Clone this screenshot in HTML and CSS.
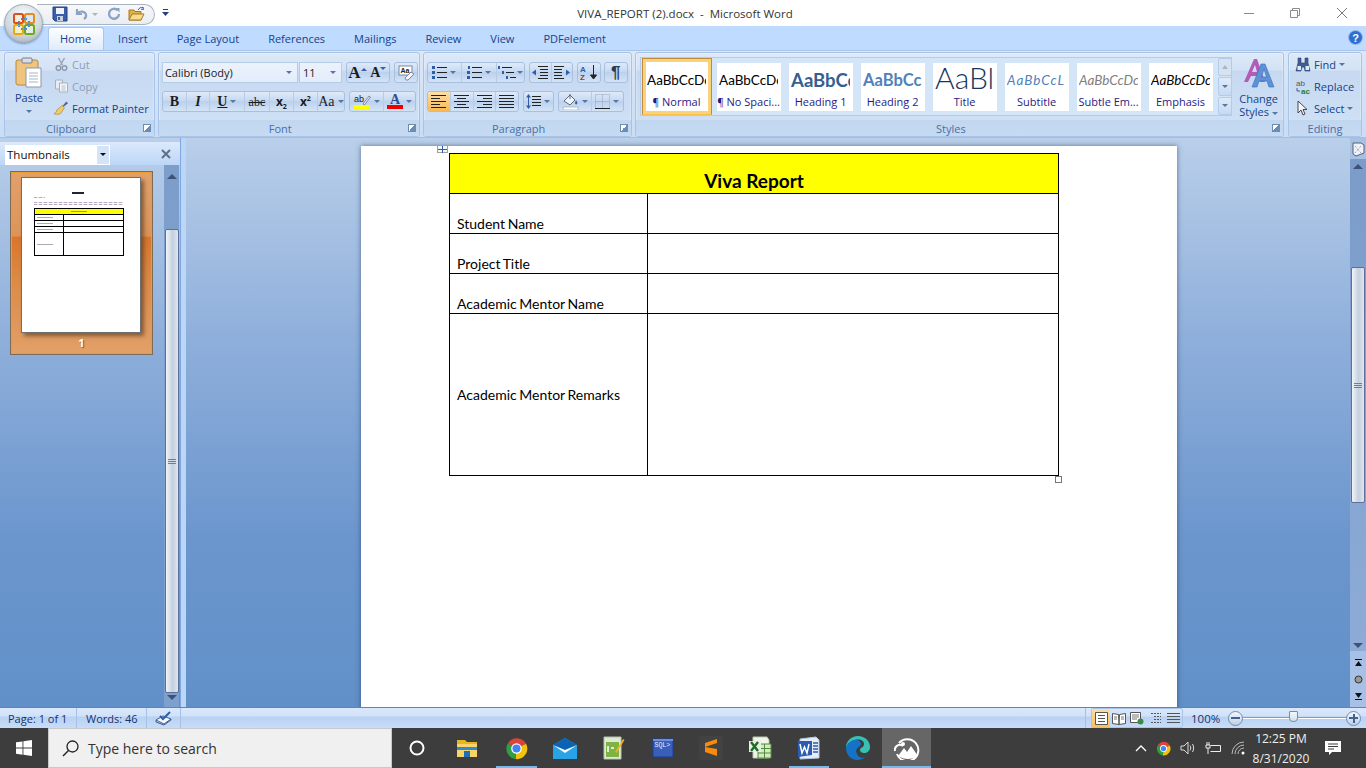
FILE: index.html
```html
<!doctype html>
<html>

	<head>
		<title>VIVA_REPORT (2).docx - Microsoft Word</title>
		<meta name="viewport" content="width=device-width, initial-scale=1.0">
		<link rel="stylesheet" href="styles.css">
	</head>

	<body>

		<!--	Office button, sits over the title bar and the tabs.	-->
		<div class="officeBtn">
			<svg width="22" height="22" viewBox="0 0 22 22">
				<rect x="1" y="1" width="9" height="9" rx="1.5" fill="#f6efe0" stroke="#d8501c" stroke-width="2"/>
				<rect x="12" y="1" width="9" height="9" rx="1.5" fill="#dbe8f4" stroke="#e58a1f" stroke-width="2"/>
				<rect x="1" y="12" width="9" height="9" rx="1.5" fill="#f6efc8" stroke="#e8a812" stroke-width="2"/>
				<rect x="12" y="12" width="9" height="9" rx="1.5" fill="#e6f0d8" stroke="#6ca82c" stroke-width="2"/>
				<path d="M8 6h6M6 8v6M16 8v6M8 16h6" stroke="#4a8cc8" stroke-width="2" stroke-dasharray="1.5 1"/>
			</svg>
		</div>

		<!--	Title bar.	-->
		<header class="titleBar">
			<div class="titleLeft">
				<div class="qat">
					<svg width="16" height="16" viewBox="0 0 16 16">
						<path d="M1 1h14v14H3l-2-2z" fill="#3a5fa8" stroke="#27417c"/>
						<rect x="4" y="2" width="8" height="6" fill="#eef3fb"/>
						<rect x="5" y="10" width="6" height="5" fill="#c9d3e4"/>
						<rect x="6" y="11" width="2" height="3" fill="#3a5fa8"/>
					</svg>
					<svg class="qatUndo" width="14" height="14" viewBox="0 0 14 14">
						<path d="M3 2v5h5M3.500 6.500C6 3.500 11 4 12 7.500c.5 2-.5 3.500-2 4.500" fill="none" stroke="#8ba3c4" stroke-width="2.200"/>
					</svg>
					<span class="caret grey qatCaret"></span>
					<svg class="qatRedo" width="14" height="14" viewBox="0 0 14 14">
						<path d="M10.500 3.200A5 5 0 1 0 12 7" fill="none" stroke="#8ba3c4" stroke-width="2.400"/>
						<path d="M8 1l4.500 0v4.500z" fill="#8ba3c4"/>
					</svg>
					<svg class="qatOpen" width="18" height="16" viewBox="0 0 18 16">
						<path d="M1 4h5l1 1.500h6V14H1z" fill="#e2b04a" stroke="#a67a24"/>
						<path d="M1 14l3-6h12l-3 6z" fill="#f7dc8c" stroke="#a67a24"/>
						<path d="M10 4c1-2 3-3 5-2.500M15 1l.5 2.500-2.500-.3" fill="none" stroke="#3a5fa8"/>
					</svg>
				</div>
				<svg class="qatMore" width="7" height="8" viewBox="0 0 7 8"><path d="M1 0h5v1H1zM0 3h7L3.500 7z" fill="#23407a"/></svg>
			</div>
			<div class="docTitle">VIVA_REPORT (2).docx&nbsp; - &nbsp;Microsoft Word</div>
			<div class="winControls">
				<svg width="12" height="12" viewBox="0 0 12 12"><path d="M0 6.500h10" stroke="#8a8a8a"/></svg>
				<svg width="12" height="12" viewBox="0 0 12 12"><path d="M.500 3.500h7v7h-7zM2.500 3.500v-2h7v7h-2" fill="none" stroke="#8a8a8a"/></svg>
				<svg width="12" height="12" viewBox="0 0 12 12"><path d="M1 1l10 10M11 1L1 11" stroke="#7a7a7a"/></svg>
			</div>
		</header>

		<!--	Tabs.	-->
		<nav class="tabRow">
			<a class="tab active">Home</a>
			<a class="tab">Insert</a>
			<a class="tab">Page Layout</a>
			<a class="tab">References</a>
			<a class="tab">Mailings</a>
			<a class="tab">Review</a>
			<a class="tab">View</a>
			<a class="tab">PDFelement</a>
			<svg class="helpIcon" width="15" height="15" viewBox="0 0 15 15">
				<circle cx="7.500" cy="7.500" r="7" fill="#2f6fd0" stroke="#9dbce8"/>
				<text x="7.500" y="11.500" text-anchor="middle" font-family="Liberation Sans" font-weight="700" font-size="11" fill="#fff">?</text>
			</svg>
		</nav>

		<!--	The ribbon.	-->
		<section class="ribbon">

			<div class="group grpClipboard">
				<div class="groupBody clipBody">
					<div class="pasteBtn">
						<svg width="28" height="31" viewBox="0 0 28 31">
							<rect x="1" y="3" width="22" height="25" rx="2" fill="#eec47e" stroke="#b58a46"/>
							<rect x="7" y="1" width="10" height="5" rx="1" fill="#d8dde6" stroke="#78808e"/>
							<path d="M11 11h15v19H11z" fill="#fff" stroke="#8a97ab"/>
							<path d="M14 16h9M14 19h9M14 22h9M14 25h9" stroke="#a9b4c4"/>
						</svg>
						<span class="pasteLabel">Paste</span>
						<span class="caret"></span>
					</div>
					<div class="clipList">
						<div class="smallRow off">
							<svg width="14" height="14" viewBox="0 0 14 14"><path d="M4 1l4 7M10 1L6 8" stroke="#9aa5b5" stroke-width="1.500"/><circle cx="4" cy="11" r="2.300" fill="none" stroke="#8d99ab" stroke-width="1.500"/><circle cx="10" cy="11" r="2.300" fill="none" stroke="#8d99ab" stroke-width="1.500"/></svg>
							<span>Cut</span>
						</div>
						<div class="smallRow off">
							<svg width="14" height="14" viewBox="0 0 14 14"><path d="M1 1h7v9H1z" fill="#e6ecf4" stroke="#a6b0bf"/><path d="M5 4h8v9H5z" fill="#f2f5f9" stroke="#a6b0bf"/><path d="M7 7h4M7 9h4M7 11h4" stroke="#b6bfcc"/></svg>
							<span>Copy</span>
						</div>
						<div class="smallRow">
							<svg width="16" height="16" viewBox="0 0 16 16"><path d="M9 6l4-5 2 2-5 4z" fill="#5a5fa0"/><path d="M9 5l2 3-4 6c-2 1-5 1-7 0 2-1 3-2 3-4z" fill="#eecb6e" stroke="#a8842e" stroke-width=".7"/></svg>
							<span>Format Painter</span>
						</div>
					</div>
				</div>
				<div class="groupLabel">Clipboard<span class="launcher"></span></div>
			</div>

			<div class="group grpFont">
				<div class="groupBody toolRows">
					<div class="toolRow">
						<div class="combo fontName"><span>Calibri (Body)</span><span class="caret"></span></div>
						<div class="combo fontSize"><span>11</span><span class="caret"></span></div>
						<div class="btnGrp growGrp">
							<span class="tb w21 serif big"><span>A<span class="upTri"></span></span></span>
							<span class="tb w21 serif"><span>A<span class="downTri"></span></span></span>
						</div>
						<div class="btnGrp clearGrp">
							<span class="tb w22">
								<svg width="16" height="16" viewBox="0 0 16 16"><rect x="1" y="1" width="13" height="9" fill="#fff" stroke="#7b8aa0"/><text x="2.500" y="8" font-family="Liberation Sans" font-size="7" font-weight="700" fill="#222">Aa</text><path d="M7 13l6-6 3 2-6 6H8z" fill="#f4f6fa" stroke="#7b8aa0"/></svg>
							</span>
						</div>
					</div>
					<div class="toolRow">
						<div class="btnGrp fmtGrp">
							<span class="tb w23 serif bold">B</span>
							<span class="tb w23 serif ital bold">I</span>
							<span class="tb w35 serif bold"><u>U</u><span class="caret"></span></span>
							<span class="tb w25 serif strike">abc</span>
							<span class="tb w24 bold"><span>x<sub>2</sub></span></span>
							<span class="tb w24 bold"><span>x<sup>2</sup></span></span>
							<span class="tb w27 serif">Aa<span class="caret"></span></span>
						</div>
						<div class="btnGrp colorGrp">
							<span class="tb w33">
								<svg width="18" height="17" viewBox="0 0 18 17"><rect x="1" y="12" width="16" height="4" fill="#ffff00"/><text x="1" y="9" font-family="Liberation Sans" font-size="9" fill="#222">ab</text><path d="M10 11l6-8 1.500 1-6 8z" fill="#dfe6f0" stroke="#5a6b85" stroke-width=".7"/></svg>
								<span class="caret"></span>
							</span>
							<span class="tb w32">
								<svg width="16" height="17" viewBox="0 0 16 17"><rect y="12" width="16" height="4" fill="#f00000"/><text x="8" y="11" text-anchor="middle" font-family="Liberation Serif" font-weight="700" font-size="14" fill="#2b4d99">A</text></svg>
								<span class="caret"></span>
							</span>
						</div>
					</div>
				</div>
				<div class="groupLabel">Font<span class="launcher"></span></div>
			</div>

			<div class="group grpPara">
				<div class="groupBody toolRows">
					<div class="toolRow">
						<div class="btnGrp">
							<span class="tb w33">
								<svg width="15" height="15" viewBox="0 0 15 15"><path d="M5 2.500h10M5 7.500h10M5 12.500h10" stroke="#222"/><path d="M0 1h3v3H0zM0 6h3v3H0zM0 11h3v3H0z" fill="#2f5ea8"/></svg>
								<span class="caret"></span>
							</span>
							<span class="tb w35">
								<svg width="15" height="15" viewBox="0 0 15 15"><path d="M5 2.500h10M5 7.500h10M5 12.500h10" stroke="#222"/><path d="M1 1h2v3H1zM0 6h3v3H0zM0 11h3v3H0z" fill="#2f5ea8"/></svg>
								<span class="caret"></span>
							</span>
							<span class="tb w28 tight">
								<svg width="18" height="15" viewBox="0 0 18 15"><path d="M4 2.500h10M8 7.500h8M12 12.500h6" stroke="#222"/><path d="M0 1h2v3H0zM4 6h2v3H4zM8 11h2v3H8z" fill="#2f5ea8"/></svg>
								<span class="caret"></span>
							</span>
						</div>
						<div class="btnGrp">
							<span class="tb w21">
								<svg width="16" height="15" viewBox="0 0 16 15"><path d="M6 1.500h10M8 4.500h8M8 7.500h8M8 10.500h8M6 13.500h10" stroke="#222"/><path d="M0 7.500l4-3v6z" fill="#2f5ea8"/></svg>
							</span>
							<span class="tb w21">
								<svg width="16" height="15" viewBox="0 0 16 15"><path d="M0 1.500h10M0 4.500h8M0 7.500h8M0 10.500h8M0 13.500h10" stroke="#222"/><path d="M16 7.500l-4-3v6z" fill="#2f5ea8"/></svg>
							</span>
						</div>
						<div class="btnGrp">
							<span class="tb w22">
								<svg width="18" height="17" viewBox="0 0 18 17"><text x="0" y="8" font-family="Liberation Sans" font-weight="700" font-size="8" fill="#2f5ea8">A</text><text x="0" y="16" font-family="Liberation Sans" font-weight="700" font-size="8" fill="#b03030">Z</text><path d="M13.500 1v13M10.500 11l3 4 3-4z" stroke="#222" fill="#222"/></svg>
							</span>
						</div>
						<div class="btnGrp pilGrp">
							<span class="tb w22 pilcrow">&para;</span>
						</div>
					</div>
					<div class="toolRow">
						<div class="btnGrp">
							<span class="tb w22h on"><svg width="15" height="13" viewBox="0 0 15 13"><path d="M0 .500h15M0 3.500h9M0 6.500h15M0 9.500h9M0 12.500h15" stroke="#222"/></svg></span>
							<span class="tb w22h"><svg width="15" height="13" viewBox="0 0 15 13"><path d="M0 .500h15M3 3.500h9M0 6.500h15M3 9.500h9M0 12.500h15" stroke="#222"/></svg></span>
							<span class="tb w22h"><svg width="15" height="13" viewBox="0 0 15 13"><path d="M0 .500h15M6 3.500h9M0 6.500h15M6 9.500h9M0 12.500h15" stroke="#222"/></svg></span>
							<span class="tb w22h"><svg width="15" height="13" viewBox="0 0 15 13"><path d="M0 .500h15M0 3.500h15M0 6.500h15M0 9.500h15M0 12.500h15" stroke="#222"/></svg></span>
						</div>
						<div class="btnGrp">
							<span class="tb w29">
								<svg width="15" height="15" viewBox="0 0 15 15"><path d="M6 2.500h9M6 5.500h9M6 8.500h9M6 11.500h9" stroke="#222"/><path d="M2.500 0l2.500 3.500H0zM2.500 15L0 11.500h5zM2 3h1v9H2z" fill="#2f5ea8"/></svg>
								<span class="caret"></span>
							</span>
						</div>
						<div class="btnGrp">
							<span class="tb w32">
								<svg width="17" height="17" viewBox="0 0 17 17"><path d="M2 8l6-6 5 5-5 5z" fill="#f2f4f8" stroke="#5a6b85"/><path d="M8 1v5" stroke="#5a6b85"/><path d="M14 7c1 2 2 3 1 4s-2 0-2-1z" fill="#3a5fa8"/><rect x="1" y="14" width="15" height="3" fill="#fff" stroke="#9aa5b5" stroke-width=".7"/></svg>
								<span class="caret"></span>
							</span>
							<span class="tb w32">
								<svg width="15" height="15" viewBox="0 0 15 15"><path d="M.500.500h14v14H.500zM7.500.500v14M.500 7.500h14" fill="none" stroke="#9aa5b5" stroke-dasharray="1 1"/><path d="M0 14.500h15" stroke="#222"/></svg>
								<span class="caret"></span>
							</span>
						</div>
					</div>
				</div>
				<div class="groupLabel">Paragraph<span class="launcher"></span></div>
			</div>

			<div class="group grpStyles">
				<div class="groupBody stylesBody">
					<div class="gallery">
						<div class="styleItem sel"><div class="stylePrev">AaBbCcDc</div><div class="styleName"><span class="pil">&para;</span> Normal</div></div>
						<div class="styleItem"><div class="stylePrev">AaBbCcDc</div><div class="styleName"><span class="pil">&para;</span> No Spaci...</div></div>
						<div class="styleItem"><div class="stylePrev prevH1">AaBbCc</div><div class="styleName">Heading 1</div></div>
						<div class="styleItem"><div class="stylePrev prevH2">AaBbCc</div><div class="styleName">Heading 2</div></div>
						<div class="styleItem"><div class="stylePrev prevTitle">AaBl</div><div class="styleName">Title</div></div>
						<div class="styleItem"><div class="stylePrev prevSub">AaBbCcL</div><div class="styleName">Subtitle</div></div>
						<div class="styleItem"><div class="stylePrev prevSubtle">AaBbCcDc</div><div class="styleName">Subtle Em...</div></div>
						<div class="styleItem"><div class="stylePrev prevEmph">AaBbCcDc</div><div class="styleName">Emphasis</div></div>
						<div class="galleryScroll">
							<span class="gsBtn first"><span class="caret grey up"></span></span>
							<span class="gsBtn"><span class="caret"></span></span>
							<span class="gsBtn"><span class="caret more"></span></span>
						</div>
					</div>
					<div class="changeStyles">
						<svg width="32" height="30" viewBox="0 0 32 30">
							<path d="M1 24L11 1h3l8 23h-5l-2-6H8l-3 6zM9 14h5l-2-7z" fill="#b25cb8" fill-rule="evenodd"/>
							<path d="M9 29L18 6h4l9 23h-5l-2-6h-8l-2 6zM18.500 19h5L21 11z" fill="#5d92d8" stroke="#3a6cb4" stroke-width=".6" fill-rule="evenodd"/>
						</svg>
						<span>Change</span>
						<span>Styles <span class="caret"></span></span>
					</div>
				</div>
				<div class="groupLabel">Styles<span class="launcher"></span></div>
			</div>

			<div class="group grpEditing">
				<div class="groupBody editList">
					<div class="smallRow">
						<svg width="16" height="15" viewBox="0 0 16 15"><path d="M3 1h3v5h4V1h3v5l2 8h-5l-1-4H7l-1 4H1l2-8z" fill="#3f5f94" stroke="#26406c" stroke-width=".6"/><rect x="2.500" y="9" width="3.500" height="4" fill="#dfe8f5"/><rect x="10.500" y="9" width="3.500" height="4" fill="#dfe8f5"/></svg>
						<span>Find</span><span class="caret"></span>
					</div>
					<div class="smallRow">
						<svg width="16" height="15" viewBox="0 0 16 15"><text x="1" y="6.500" font-family="Liberation Sans" font-size="8" fill="#555">ab</text><text x="6" y="14.500" font-family="Liberation Sans" font-weight="700" font-size="8" fill="#2a7d2a">ac</text><path d="M2 9v3h3" fill="none" stroke="#3a5fa8"/></svg>
						<span>Replace</span>
					</div>
					<div class="smallRow">
						<svg width="16" height="16" viewBox="0 0 16 16"><path d="M3 1v12l3-3 2 5 2-1-2-4.500h4z" fill="#f4f6fa" stroke="#445"/></svg>
						<span>Select</span><span class="caret"></span>
					</div>
				</div>
				<div class="groupLabel">Editing</div>
			</div>

		</section>

		<!--	Thumbnail pane and document.	-->
		<main class="workArea">

			<aside class="thumbPane">
				<div class="paneHead">
					<div class="paneSelect"><span>Thumbnails</span><span class="paneDrop"><span class="caret black"></span></span></div>
					<svg width="10" height="10" viewBox="0 0 10 10"><path d="M1 1l8 8M9 1L1 9" stroke="#5f6f85" stroke-width="2"/></svg>
				</div>
				<div class="paneBody">
					<div class="thumbList">
						<div class="thumbCard">
							<div class="thumbPage">
								<div class="tpTitle"></div>
								<div class="tpLine short"></div>
								<div class="tpLine"></div>
								<div class="tpLine"></div>
								<div class="tpTable">
									<div class="tpHead"><em></em></div>
									<div class="tpRow"><i></i></div>
									<div class="tpRow"><i></i></div>
									<div class="tpRow"><i></i></div>
									<div class="tpRow tall"><i></i></div>
								</div>
							</div>
							<div class="thumbNum">1</div>
						</div>
					</div>
					<div class="paneScroll">
						<span class="triUp"></span>
						<div class="paneThumb"><span class="grip"></span></div>
						<span class="triDown"></span>
					</div>
				</div>
			</aside>

			<div class="splitter"></div>

			<div class="docArea">
				<div class="page">
					<span class="tableMove">
						<svg width="9" height="7" viewBox="0 0 9 7"><path d="M4.500 0v7M0 3.500h9" stroke="#2f5ea8"/></svg>
					</span>
					<div class="tableWrap">
						<table class="vivaTable">
							<colgroup><col class="colName"><col></colgroup>
							<tr><th colspan="2">Viva Report</th></tr>
							<tr><td>Student Name</td><td></td></tr>
							<tr><td>Project Title</td><td></td></tr>
							<tr><td>Academic Mentor Name</td><td></td></tr>
							<tr class="rowRemarks"><td>Academic Mentor Remarks</td><td></td></tr>
						</table>
						<span class="tableSize"></span>
					</div>
				</div>
			</div>

			<div class="docScroll">
				<svg class="rulerToggle" width="13" height="15" viewBox="0 0 13 15"><path d="M1 1h8l3 2v8l-8 3-3-2z" fill="#eef2f9" stroke="#56606e"/><path d="M3 4l6 7M9 4l-6 7" stroke="#8a94a5" stroke-dasharray="1 1"/></svg>
				<div class="docTrack">
					<span class="triUp"></span>
					<div class="docThumb"><span class="gripV"></span></div>
					<span class="triDown dsDown"></span>
				</div>
				<div class="pageNav">
					<svg width="9" height="9" viewBox="0 0 9 9"><path d="M1 1h7v1H1zM4.500 3L8 8H1z" fill="#111"/></svg>
					<svg width="9" height="9" viewBox="0 0 9 9"><circle cx="4.500" cy="4.500" r="3.500" fill="#999" stroke="#333"/></svg>
					<svg width="9" height="9" viewBox="0 0 9 9"><path d="M1 7h7v1H1zM4.500 6L8 1H1z" fill="#111"/></svg>
				</div>
			</div>

		</main>

		<!--	Status bar.	-->
		<footer class="statusBar">
			<span class="stItem stPage">Page: 1 of 1</span>
			<span class="stItem stWords">Words: 46</span>
			<span class="stItem stCheck">
				<svg width="17" height="15" viewBox="0 0 17 15"><path d="M1 9l7-4 8 3-7 5z" fill="#f4f7fb" stroke="#3f5f94"/><path d="M1 9v2l8 3 7-5V8" fill="none" stroke="#3f5f94"/><path d="M5 5l3 3 7-7" fill="none" stroke="#2f5ea8" stroke-width="2"/></svg>
			</span>
			<div class="stRight">
				<div class="viewBtns">
					<span class="vb on"><svg width="13" height="13" viewBox="0 0 13 13"><path d="M.500.500h12v12H.500z" fill="#fff" stroke="#555"/><path d="M3 3.500h7M3 6.500h7M3 9.500h7" stroke="#555"/></svg></span>
					<span class="vb"><svg width="14" height="13" viewBox="0 0 14 13"><path d="M.500 1.500l6 1 .5 10-6.500-1zM13.500 1.500l-6 1-.5 10 6.500-1z" fill="#fff" stroke="#555"/><path d="M2 5h3M2 7h3M9 5h3M9 7h3" stroke="#777"/></svg></span>
					<span class="vb"><svg width="14" height="13" viewBox="0 0 14 13"><path d="M.500.500h10v10H.500z" fill="#fff" stroke="#555"/><path d="M2 3h7M2 5h7M2 7h5" stroke="#777"/><circle cx="10.500" cy="9.500" r="3" fill="#3a8a4a"/></svg></span>
					<span class="vb"><svg width="13" height="13" viewBox="0 0 13 13"><path d="M2 1.500h10M5 4.500h7M5 7.500h7M2 10.500h10" stroke="#555" stroke-dasharray="2 1"/></svg></span>
					<span class="vb"><svg width="13" height="13" viewBox="0 0 13 13"><path d="M0 1.500h13M0 4.500h13M0 7.500h13M0 10.500h13" stroke="#555"/></svg></span>
				</div>
				<span class="zoomPct">100%</span>
				<span class="zoomBtn"><i></i></span>
				<div class="zoomSlider"><span class="zoomKnob"></span></div>
				<span class="zoomBtn plus"><i></i><b></b></span>
			</div>
		</footer>

		<!--	Windows taskbar.	-->
		<div class="taskbar">
			<div class="startBtn">
				<svg width="16" height="16" viewBox="0 0 16 16"><path d="M0 2.300l6.500-.9v6.200H0zM7.400 1.300L16 0v7.600H7.400zM0 8.500h6.500v6.200L0 13.800zM7.400 8.500H16V16l-8.600-1.200z" fill="#fff"/></svg>
			</div>
			<div class="searchBox">
				<svg width="17" height="17" viewBox="0 0 17 17"><circle cx="10.500" cy="6.500" r="5.500" fill="none" stroke="#222" stroke-width="1.300"/><path d="M6.500 10.500L1 16" stroke="#222" stroke-width="1.500"/></svg>
				<span>Type here to search</span>
			</div>
			<div class="tbIcon cortana"><svg width="16" height="16" viewBox="0 0 16 16"><circle cx="8" cy="8" r="6.500" fill="none" stroke="#fff" stroke-width="2"/></svg></div>
			<div class="tbIcon">
				<svg width="22" height="20" viewBox="0 0 22 20"><path d="M1 2h8l2 2h10v3H1z" fill="#e8b620"/><path d="M1 6h20v13H1z" fill="#f8d568"/><path d="M1 9h20v3H1z" fill="#2e8ad6"/><rect x="8" y="13" width="6" height="6" fill="#1f6fb4"/></svg>
			</div>
			<div class="tbIcon running">
				<svg width="23" height="23" viewBox="0 0 24 24"><path d="M12 12L3 6.500A11 11 0 0 1 22 7z" fill="#db4437"/><path d="M12 12l10-5a11 11 0 0 1-11 16z" fill="#f4c20d"/><path d="M12 12l-1 11A11 11 0 0 1 3 6.500z" fill="#2f9e44"/><circle cx="12" cy="12" r="5.500" fill="#fff"/><circle cx="12" cy="12" r="4.200" fill="#4285f4"/></svg>
			</div>
			<div class="tbIcon">
				<svg width="24" height="22" viewBox="0 0 24 22"><path d="M0 8l12-7 12 7v14H0z" fill="#29a3e8"/><path d="M0 8l12-7 12 7-12 7z" fill="#0b63b5"/><path d="M0 8l12 8 12-8-12 5z" fill="#fff"/></svg>
			</div>
			<div class="tbIcon">
				<svg width="22" height="24" viewBox="0 0 22 24"><path d="M1 1h17v22H1z" fill="#dfe9d4" stroke="#b8c2ac"/><rect x="3" y="6" width="13" height="15" fill="#7cb342"/><path d="M5 10v6M8 12h3" stroke="#fff" stroke-width="1.500"/><path d="M12 16L20 3l1.500 1-8 13z" fill="#f0b429"/></svg>
			</div>
			<div class="tbIcon">
				<svg width="22" height="20" viewBox="0 0 22 20"><rect x="1" y="1" width="20" height="18" fill="#3a5fb8" stroke="#1d3f9c"/><rect x="1" y="1" width="20" height="2" fill="#6d8fdc"/><text x="2.500" y="9" font-family="Liberation Mono" font-size="6.500" fill="#e6ecf8">SQL&gt;</text></svg>
			</div>
			<div class="tbIcon">
				<svg width="24" height="24" viewBox="0 0 24 24"><rect width="24" height="24" rx="2" fill="#424242"/><path d="M6 7l12-4v4L6 11zM6 12l12 4v4L6 16zM6 11l12 2v3L6 12z" fill="#f78c0c"/></svg>
			</div>
			<div class="tbIcon">
				<svg width="24" height="24" viewBox="0 0 24 24"><path d="M5 1h14l2 3v18H5z" fill="#f0f4ea" stroke="#b8c8a8"/><path d="M10 8h13v14H10z" fill="#d6e8c4" stroke="#4f8f3a"/><path d="M10 12.500h13M10 17h13M16.500 8v14" stroke="#4f8f3a"/><path d="M1 5h12v11H1z" fill="#e7f0dd"/><path d="M3 6l7 9M10 6l-7 9" stroke="#1e6e2a" stroke-width="2.400"/></svg>
			</div>
			<div class="tbIcon running">
				<svg width="24" height="24" viewBox="0 0 24 24"><path d="M3 3l16-2 3 3v18l-19 1z" fill="#e6edf8" stroke="#b6c6e0"/><path d="M1 5h14v14L1 21z" fill="#2c5cb0"/><path d="M3 8l2 9 2.500-6 2.500 6 2-9" fill="none" stroke="#fff" stroke-width="1.500"/><path d="M16 7h5M16 10h5M16 13h5M16 16h5" stroke="#2c5cb0" stroke-width="1.500"/></svg>
			</div>
			<div class="tbIcon">
				<svg width="24" height="24" viewBox="0 0 24 24"><path d="M12 0c7 0 12 5 12 11 0 4-3 6-6 6-2 0-4-1-4-3 0-3 4-2 4-6C18 4 12 2 7 5 3 7 1 11 0 12 0 5 5 0 12 0z" fill="#36c1b4"/><path d="M0 12c1-5 6-9 11-8 4 1 5 4 3 6-3 2-5 4-3 8 1 3 5 5 9 3-3 2-6 3-9 3C5 24 0 19 0 12z" fill="#1473c7"/></svg>
			</div>
			<div class="tbIcon active">
				<svg width="26" height="24" viewBox="0 0 26 24"><path d="M5 7A11 11 0 1 1 3 18" fill="none" stroke="#fff" stroke-width="2"/><path d="M1 15a5 5 0 0 1 8-5" fill="none" stroke="#fff" stroke-width="2"/><path d="M4 20l6-8 3 4 4-6 7 10c-6 4-14 4-20 0z" fill="#fff"/><circle cx="9" cy="8" r="2" fill="#fff"/></svg>
			</div>

			<div class="tray">
				<svg width="12" height="8" viewBox="0 0 12 8"><path d="M1 7l5-5 5 5" fill="none" stroke="#fff" stroke-width="1.300"/></svg>
				<svg width="15" height="15" viewBox="0 0 24 24"><path d="M12 12L3 6.500A11 11 0 0 1 22 7z" fill="#db4437"/><path d="M12 12l10-5a11 11 0 0 1-11 16z" fill="#f4c20d"/><path d="M12 12l-1 11A11 11 0 0 1 3 6.500z" fill="#2f9e44"/><circle cx="12" cy="12" r="5.500" fill="#fff"/><circle cx="12" cy="12" r="4.200" fill="#4285f4"/></svg>
				<svg width="16" height="14" viewBox="0 0 16 14"><path d="M1 5h3l4-4v12l-4-4H1z" fill="none" stroke="#ddd"/><path d="M10 4.500c1 1.500 1 3.500 0 5M12.500 3c1.500 2.500 1.500 5.500 0 8" fill="none" stroke="#ddd"/></svg>
				<svg width="17" height="12" viewBox="0 0 17 12"><path d="M5.500 3.500h10v6h-10" fill="none" stroke="#eee"/><path d="M2 0v3M4 0v3M1 3h4v3H1zM3 6v6" fill="none" stroke="#eee"/></svg>
				<svg width="15" height="14" viewBox="0 0 15 14"><path d="M1 13A12 12 0 0 1 13 1M4 13a9 9 0 0 1 9-9M7 13a6 6 0 0 1 6-6" fill="none" stroke="#bbb"/><circle cx="12" cy="12" r="1.500" fill="#fff"/></svg>
				<div class="clock"><span>12:25 PM</span><span>8/31/2020</span></div>
				<svg class="notif" width="16" height="16" viewBox="0 0 16 16"><path d="M0 1h16v11H7l-3 3v-3H0z" fill="#fff"/><path d="M3 4h10M3 6.500h10M3 9h6" stroke="#3c3c3c"/></svg>
			</div>
		</div>

	</body>

</html>
```

FILE: styles.css
```css
html, body {
	margin: 0;
	padding: 0;
	width: 1366px;
	height: 768px;
	overflow: hidden;
	background-color: #bfdbff;
	font-family: "Open Sans", "Noto Sans", sans-serif;
	font-size: 11px;
	color: #15428b;
}

svg {
	display: block;
	flex: none;
}

/* carets */
.caret {
	display: inline-block;
	width: 0;
	height: 0;
	border-left: 3px solid transparent;
	border-right: 3px solid transparent;
	border-top: 3px solid #56779f;
	vertical-align: middle;
}

.caret.grey {
	border-top-color: #a9b6c8;
}

.caret.black {
	border-top-color: #111;
}

.caret.up {
	border-top: 0;
	border-bottom: 4px solid #a9b6c8;
}

.caret.more {
	box-shadow: 0 -4px 0 -3px #56779f;
}

/* office button */
.officeBtn {
	position: absolute;
	left: 4px;
	top: 4px;
	width: 37px;
	height: 37px;
	border-radius: 50%;
	background: radial-gradient(circle at 50% 30%, #fbfcfd, #cfd6dd 60%, #98a4ae);
	border: 1px solid #9aa7b3;
	box-shadow: 0 1px 2px rgba(60, 80, 110, .5);
	display: flex;
	align-items: center;
	justify-content: center;
	z-index: 5;
}

/* title bar */
.titleBar {
	height: 26px;
	background-color: #fff;
	display: grid;
	grid-template-columns: 1fr auto 1fr;
	align-items: center;
}

.titleLeft {
	display: flex;
	align-items: center;
	padding-left: 37px;
}

.qat {
	width: 118px;
	height: 21px;
	box-sizing: border-box;
	margin-top: 2px;
	border: 1px solid #a9b4c2;
	border-left: 0;
	border-radius: 0 12px 12px 0;
	background: linear-gradient(#f7f8fa, #e9edf2);
	display: flex;
	align-items: center;
	padding-left: 15px;
}

.qatUndo {
	margin-left: 6px;
}

.qatCaret {
	margin-left: 4px;
}

.qatRedo {
	margin-left: 9px;
}

.qatOpen {
	margin-left: 7px;
}

.qatMore {
	margin-left: 7px;
}

.docTitle {
	font-size: 11.500px;
	color: #333;
	margin-left: 4px;
	white-space: nowrap;
}

.winControls {
	display: flex;
	justify-content: flex-end;
	gap: 34px;
	padding-right: 18px;
}

/* tabs */
.tabRow {
	height: 24px;
	background-color: #bfdbff;
	display: flex;
	align-items: flex-end;
	padding-left: 46px;
	position: relative;
}

.tab {
	padding: 0 14px;
	margin-right: 1px;
	height: 22px;
	line-height: 21px;
	color: #15428b;
}

.tab.active {
	background: linear-gradient(#fdfeff, #dfebf9);
	border: 1px solid #a9c6ea;
	border-bottom: 0;
	border-radius: 3px 3px 0 0;
	padding: 0 12px 0 11px;
	margin-left: 2px;
	margin-right: 0;
}

.helpIcon {
	margin-left: auto;
	margin-right: 3px;
	margin-bottom: 5px;
}

/* ribbon */
.ribbon {
	height: 88px;
	box-sizing: border-box;
	padding: 1px 4px 0;
	display: flex;
	gap: 3px;
	background: linear-gradient(#dbe8f8, #c9ddf5);
	border-top: 1px solid #a9c6ea;
	border-bottom: 1px solid #9fc0e6;
}

.group {
	box-sizing: border-box;
	border: 1px solid #a7c4e8;
	border-radius: 3px;
	background: linear-gradient(#dde9f8 0, #d3e2f5 20%, #c6d9f1 22%, #d1e2f6 100%);
	display: flex;
	flex-direction: column;
	box-shadow: inset 0 0 0 1px rgba(255, 255, 255, .25);
}

.grpClipboard {
	width: 151px;
}

.grpFont {
	width: 262px;
}

.grpPara {
	width: 209px;
}

.grpStyles {
	width: 650px;
}

.grpEditing {
	width: 74px;
	margin-left: 1px;
}

.groupBody {
	flex: 1;
	min-height: 0;
}

.groupLabel {
	height: 16px;
	line-height: 17px;
	box-sizing: border-box;
	padding-right: 17px;
	text-align: center;
	color: #4a6fa5;
	background: linear-gradient(#c1d7f0, #c6daf2);
	position: relative;
	border-radius: 0 0 3px 3px;
}

.grpEditing .groupLabel {
	padding-right: 0;
}

.launcher {
	position: absolute;
	right: 3px;
	top: 4px;
	width: 6px;
	height: 6px;
	border: 1px solid #6d8cb4;
	background: linear-gradient(135deg, #fff 50%, #6d8cb4 50%);
}

.smallRow {
	height: 22px;
	display: flex;
	align-items: center;
	gap: 3px;
	color: #15428b;
	white-space: nowrap;
}

.smallRow.off {
	color: #8d9db4;
}

/* clipboard */
.clipBody {
	display: flex;
}

.pasteBtn {
	width: 48px;
	display: flex;
	flex-direction: column;
	align-items: center;
	padding-top: 4px;
}

.pasteLabel {
	margin-top: 2px;
	line-height: 15px;
}

.pasteBtn .caret {
	margin-top: 5px;
}

.clipList {
	padding-left: 1px;
}

.clipList svg {
	width: 15px;
}

/* font and paragraph rows */
.toolRows {
	display: flex;
	flex-direction: column;
	gap: 8px;
	padding: 9px 0 0 3px;
}

.toolRow {
	display: flex;
	gap: 4px;
}

.combo {
	height: 21px;
	box-sizing: border-box;
	background: linear-gradient(#eaf2fc, #e3edfa);
	border: 1px solid #b6cde8;
	display: flex;
	align-items: center;
	justify-content: space-between;
	padding: 0 5px 0 2px;
	color: #1c1c1c;
}

.fontName {
	width: 136px;
	margin-right: -3px;
}

.fontSize {
	width: 43px;
	padding-left: 3px;
}

.btnGrp {
	height: 21px;
	display: flex;
	box-sizing: border-box;
	border: 1px solid #a8c0dd;
	border-radius: 3px;
	background: linear-gradient(#dfeafa, #c6d9f2 45%, #bbd1ee 50%, #d4e3f6);
	color: #1c1c1c;
}

.pilGrp {
	margin-left: -1px;
}

.tb {
	display: flex;
	align-items: center;
	justify-content: center;
	gap: 3px;
	box-sizing: border-box;
	border-left: 1px solid #b7cbe4;
	font-size: 12px;
	line-height: 1;
}

.tb.tight {
	gap: 1px;
}

.tb:first-child {
	border-left: 0;
}

.tb.on {
	background: linear-gradient(#fcdfa6, #f8b850);
	border-radius: 2px 0 0 2px;
}

.w21 { width: 21px; }
.w22 { width: 22px; }
.w22h { width: 22.500px; }
.w23 { width: 23px; }
.w24 { width: 24px; }
.w25 { width: 25px; }
.w27 { width: 27px; }
.w28 { width: 28px; }
.w29 { width: 29px; }
.w32 { width: 32px; }
.w33 { width: 33px; }
.w35 { width: 35px; }

.serif {
	font-family: "Liberation Serif", serif;
	font-size: 14px;
}

.bold {
	font-weight: 700;
}

.ital {
	font-style: italic;
}

.strike {
	text-decoration: line-through;
	font-size: 12px;
}

.big {
	font-size: 17px;
	font-weight: 700;
}

.growGrp .tb {
	border-left: 0;
	font-weight: 700;
}

.tb sub, .tb sup {
	font-size: 7px;
	line-height: 0;
}

.upTri, .downTri {
	display: inline-block;
	width: 0;
	height: 0;
	border-left: 3px solid transparent;
	border-right: 3px solid transparent;
	vertical-align: 7px;
}

.upTri {
	border-bottom: 3px solid #3a5fa8;
}

.downTri {
	border-top: 3px solid #3a5fa8;
}

.pilcrow {
	font-size: 17px;
	font-weight: 700;
	font-family: "Liberation Sans", sans-serif;
	color: #2b3a50;
}

/* styles gallery */
.stylesBody {
	display: flex;
	padding: 4px 0 0 4px;
}

.gallery {
	width: 592px;
	height: 59px;
	box-sizing: border-box;
	border: 1px solid #b3cce9;
	background-color: #d5e5f8;
	display: flex;
	align-items: center;
	gap: 8px;
	padding-left: 1px;
}

.styleItem {
	flex: none;
	width: 64px;
	height: 48px;
	background-color: #fff;
	display: flex;
	flex-direction: column;
	align-items: center;
	box-sizing: border-box;
}

.styleItem.sel {
	width: 70px;
	height: 57px;
	border: 1px solid #c28a3c;
	border-bottom-color: #f8c14a;
	box-shadow: inset 0 0 0 3px #fbd27c;
	margin-right: -3px;
	padding-top: 4px;
}

.stylePrev {
	width: 59px;
	height: 29px;
	line-height: 34px;
	overflow: hidden;
	white-space: nowrap;
	color: #000;
	font-family: Lato, sans-serif;
	font-size: 13.500px;
}

.styleName {
	color: #1f1a85;
	white-space: nowrap;
	line-height: 16px;
	margin-top: 2px;
}

.pil {
	font-size: 10px;
}

.prevH1 {
	color: #365f91;
	font-weight: 700;
	font-size: 18.500px;
}

.prevH2 {
	color: #4f81bd;
	font-weight: 700;
	font-size: 16.500px;
}

.prevTitle {
	color: #17365d;
	font-weight: 300;
	font-size: 30px;
	line-height: 29px;
}

.prevSub {
	color: #4f81bd;
	font-style: italic;
	letter-spacing: 1px;
}

.prevSubtle {
	color: #808080;
	font-style: italic;
}

.prevEmph {
	font-style: italic;
}

.galleryScroll {
	flex: none;
	margin-left: -3px;
	width: 14px;
	height: 57px;
	display: flex;
	flex-direction: column;
	gap: 1px;
}

.gsBtn {
	flex: 1;
	display: flex;
	align-items: center;
	justify-content: center;
	border: 1px solid #b3cce9;
	border-radius: 2px;
	background: linear-gradient(#dfeafa, #c6daf3);
}

.gsBtn.first {
	background: #d8e3f2;
}

.changeStyles {
	width: 48px;
	margin-left: 3px;
	display: flex;
	flex-direction: column;
	align-items: center;
	padding-top: 1px;
	line-height: 13px;
	color: #15428b;
}

.changeStyles svg {
	margin-bottom: 4px;
}

/* editing */
.editList {
	padding-left: 6px;
}

/* work area */
.workArea {
	height: 569px;
	display: flex;
	background: linear-gradient(#b9cfea 0, #8fafdb 35%, #6b96cd 70%, #6190c8 100%);
	overflow: hidden;
}

.thumbPane {
	width: 180px;
	display: flex;
	flex-direction: column;
}

.paneHead {
	margin-top: 4px;
	height: 23px;
	background: linear-gradient(#dce9fb, #bcd6f8);
	display: flex;
	align-items: center;
	justify-content: space-between;
	padding: 0 9px 0 5px;
}

.paneSelect {
	width: 105px;
	height: 20px;
	margin-top: 2px;
	box-sizing: border-box;
	background-color: #fff;
	color: #111;
	font-size: 11.500px;
	display: flex;
	align-items: center;
	justify-content: space-between;
	padding-left: 2px;
}

.paneDrop {
	width: 12px;
	height: 18px;
	background-color: #d4e3f8;
	display: flex;
	align-items: center;
	justify-content: center;
	margin-right: 1px;
}

.paneBody {
	flex: 1;
	display: flex;
	justify-content: space-between;
	min-height: 0;
}

.thumbList {
	padding: 6px 0 0 10px;
}

.thumbCard {
	width: 143px;
	height: 184px;
	box-sizing: border-box;
	border: 1px solid #7b6c58;
	box-shadow: inset 0 0 0 1px #f09c2a;
	background: linear-gradient(#e2a16a 0, #dd9458 35%, #d9762a 36%, #dd8a48 60%, #e2a068 100%);
	display: flex;
	flex-direction: column;
	align-items: center;
	padding-top: 5px;
}

.thumbPage {
	width: 120px;
	height: 156px;
	box-sizing: border-box;
	background-color: #fff;
	border: 1px solid #6f6f6f;
	box-shadow: 3px 3px 4px rgba(70, 50, 30, .6);
	padding: 14px 17px 0 12px;
	margin-left: -2px;
}

.tpTitle {
	width: 12px;
	height: 2px;
	margin: 0 auto 3px;
	background-color: #223;
}

.tpLine {
	height: 1px;
	margin-bottom: 1px;
	background: repeating-linear-gradient(90deg, #b9a7c0 0 3px, #e6e0ea 3px 5px);
}

.tpLine.short {
	width: 11px;
	margin-bottom: 4px;
}

.tpTable {
	border: 1px solid #000;
	margin-top: 3px;
	width: 88px;
	box-sizing: content-box;
}

.tpHead {
	height: 5px;
	background-color: #ff0;
	border-bottom: 1px solid #000;
	display: flex;
	align-items: center;
	justify-content: center;
}

.tpHead em {
	width: 16px;
	height: 1px;
	background-color: #9a9a30;
}

.tpRow {
	height: 5px;
	border-bottom: 1px solid #000;
}

.tpRow i {
	display: flex;
	align-items: center;
	padding-left: 2px;
	box-sizing: border-box;
	width: 29px;
	height: 100%;
	border-right: 1px solid #000;
}

.tpRow i::after {
	content: "";
	width: 16px;
	height: 1px;
	background-color: #a8a8b8;
}

.tpRow.tall {
	height: 22px;
	border-bottom: 0;
}

.thumbNum {
	color: #fff;
	font-weight: 700;
	font-size: 11px;
	line-height: 14px;
	margin-top: 3px;
	text-shadow: 1px 1px 1px #7a5530;
}

.paneScroll {
	width: 15px;
	margin-right: 1px;
	display: flex;
	flex-direction: column;
	align-items: center;
	padding-top: 9px;
	background: linear-gradient(#7d9ecb, #7ea0ce);
}

.triUp, .triDown {
	display: block;
	width: 0;
	height: 0;
	border-left: 5px solid transparent;
	border-right: 5px solid transparent;
}

.triUp {
	border-bottom: 5px solid #3c5278;
}

.triDown {
	border-top: 5px solid #3c5278;
}

.paneThumb {
	width: 14px;
	height: 464px;
	margin: 50px 0 2px;
	box-sizing: border-box;
	border: 1px solid #5d7099;
	border-radius: 2px;
	background: linear-gradient(90deg, #f1f4f8, #c4d0de 55%, #dfe6ef);
	display: flex;
	align-items: center;
	justify-content: center;
}

.grip {
	width: 8px;
	height: 5px;
	background: repeating-linear-gradient(#6f7f9a 0 1px, transparent 1px 2px);
}

.splitter {
	width: 6px;
	box-sizing: border-box;
	border-left: 1px solid #7fa8e0;
	background-color: #bcd6f8;
}

.docArea {
	width: 1164px;
	overflow: hidden;
}

.page {
	width: 816px;
	height: 700px;
	margin: 8px 0 0 175px;
	background-color: #fff;
	box-shadow: 0 0 5px rgba(30, 50, 90, .6);
	padding: 7px 0 0 88px;
	box-sizing: border-box;
	position: relative;
}

.tableMove {
	position: absolute;
	left: 76px;
	top: 0;
	width: 11px;
	height: 7px;
	border: 1px solid #a0a0a0;
	border-top: 0;
	box-sizing: border-box;
	background-color: #f4f6fa;
	display: flex;
	justify-content: center;
}

.tableWrap {
	position: relative;
	width: 610px;
}

.vivaTable {
	border-collapse: collapse;
	width: 610px;
	table-layout: fixed;
	font-family: Lato, "Liberation Sans", sans-serif;
	color: #000;
	font-size: 14px;
	word-spacing: -1px;
}

.vivaTable th {
	height: 40px;
	box-sizing: border-box;
	background-color: #ff0;
	border: 1px solid #000;
	vertical-align: bottom;
	font-size: 19px;
	font-weight: 700;
	line-height: 24px;
	padding: 0;
	word-spacing: 0;
}

.vivaTable td {
	height: 40px;
	box-sizing: border-box;
	border: 1px solid #000;
	vertical-align: bottom;
	padding: 0 7px;
	line-height: 18px;
}

.colName {
	width: 198px;
}

.vivaTable .rowRemarks td {
	height: 162px;
	vertical-align: middle;
}

.tableSize {
	position: absolute;
	right: -3px;
	bottom: -7px;
	width: 5px;
	height: 5px;
	border: 1px solid #777;
	background-color: #fff;
}

/* document scrollbar */
.docScroll {
	width: 16px;
	display: flex;
	flex-direction: column;
	align-items: center;
	background-color: #a7c1e6;
}

.rulerToggle {
	margin-top: 4px;
	margin-bottom: 2px;
}

.docTrack {
	flex: 1;
	width: 16px;
	background: linear-gradient(#7b9bc9, #8dabd6);
	display: flex;
	flex-direction: column;
	align-items: center;
	padding-top: 5px;
	box-sizing: border-box;
}

.docThumb {
	width: 14px;
	height: 236px;
	margin-top: 98px;
	box-sizing: border-box;
	border: 1px solid #5d7099;
	border-radius: 2px;
	background: linear-gradient(90deg, #f1f4f8, #c4d0de 55%, #dfe6ef);
	display: flex;
	align-items: center;
	justify-content: center;
}

.gripV {
	width: 8px;
	height: 5px;
	background: repeating-linear-gradient(#6f7f9a 0 1px, transparent 1px 2px);
}

.dsDown {
	margin-top: 140px;
}

.pageNav {
	height: 56px;
	box-sizing: border-box;
	padding-top: 7px;
	display: flex;
	flex-direction: column;
	align-items: center;
	gap: 8px;
}

/* status bar */
.statusBar {
	height: 21px;
	box-sizing: border-box;
	border-top: 1px solid #5b86bd;
	background: linear-gradient(#dbe8fb 0, #cfe1f9 40%, #b8d2f3 45%, #c8dcf7 100%);
	display: flex;
	align-items: center;
	color: #15326f;
}

.stItem {
	height: 100%;
	display: flex;
	align-items: center;
	box-sizing: border-box;
	border-right: 1px solid #a5c2e6;
}

.stPage {
	width: 77px;
	padding-left: 8px;
}

.stWords {
	width: 70px;
	padding-left: 9px;
}

.stCheck {
	width: 34px;
	padding-left: 8px;
}

.stRight {
	margin-left: auto;
	display: flex;
	align-items: center;
	height: 100%;
	border-left: 1px solid #a5c2e6;
	padding-left: 5px;
}

.viewBtns {
	display: flex;
	height: 18px;
	border: 1px solid #a9c4e6;
	border-radius: 2px;
}

.vb {
	width: 18px;
	display: flex;
	align-items: center;
	justify-content: center;
}

.vb.on {
	background: linear-gradient(#fcdfa6, #f8c060);
}

.zoomPct {
	margin-left: 8px;
	width: 37px;
	font-size: 11.500px;
	color: #15326f;
}

.zoomBtn {
	flex: none;
	width: 15px;
	height: 15px;
	box-sizing: border-box;
	border-radius: 50%;
	border: 1px solid #6f8cb2;
	background: linear-gradient(#f4f7fb, #bcd0e8);
	position: relative;
	display: block;
}

.zoomBtn i {
	position: absolute;
	left: 2px;
	top: 5px;
	width: 9px;
	height: 2px;
	background-color: #44618c;
}

.zoomBtn b {
	position: absolute;
	left: 5.500px;
	top: 2px;
	width: 2px;
	height: 9px;
	background-color: #44618c;
}

.zoomSlider {
	width: 103px;
	height: 1px;
	background-color: #7f9cc4;
	border-bottom: 1px solid #fff;
	position: relative;
	display: block;
}

.zoomKnob {
	position: absolute;
	left: 46px;
	top: -6px;
	width: 9px;
	height: 11px;
	box-sizing: border-box;
	border: 1px solid #6f8cb2;
	border-radius: 1px 1px 4px 4px;
	background: linear-gradient(#f4f7fb, #d3e0f0);
}

.zoomBtn.plus {
	margin-right: 5px;
}

/* taskbar */
.taskbar {
	height: 40px;
	background-color: #3d3d3d;
	display: flex;
	align-items: stretch;
	color: #fff;
}

.startBtn {
	width: 48px;
	display: flex;
	align-items: center;
	justify-content: center;
}

.searchBox {
	width: 344px;
	box-sizing: border-box;
	background-color: #f0f0f0;
	border: 1px solid #c8c8c8;
	display: flex;
	align-items: center;
	padding-left: 13px;
	gap: 9px;
	color: #333;
	font-size: 14px;
}

.tbIcon {
	width: 48.800px;
	display: flex;
	align-items: center;
	justify-content: center;
	box-sizing: border-box;
	position: relative;
}

.tbIcon.cortana {
	width: 50px;
	margin-right: 1px;
}

.tbIcon.running::after {
	content: "";
	position: absolute;
	left: 4px;
	right: 4px;
	bottom: 0;
	height: 2px;
	background-color: #76b9ed;
}

.tbIcon.active {
	background-color: #666;
}

.tbIcon.active::after {
	content: "";
	position: absolute;
	left: 0;
	right: 0;
	bottom: 0;
	height: 2px;
	background-color: #76b9ed;
}

.tray {
	margin-left: auto;
	display: flex;
	align-items: center;
	gap: 9px;
	padding-right: 25px;
}

.clock {
	display: flex;
	flex-direction: column;
	align-items: center;
	font-size: 12px;
	line-height: 20px;
	width: 60px;
	padding-top: 1px;
	margin-left: -4px;
	color: #eee;
}

.notif {
	margin-left: 5px;
}
```
